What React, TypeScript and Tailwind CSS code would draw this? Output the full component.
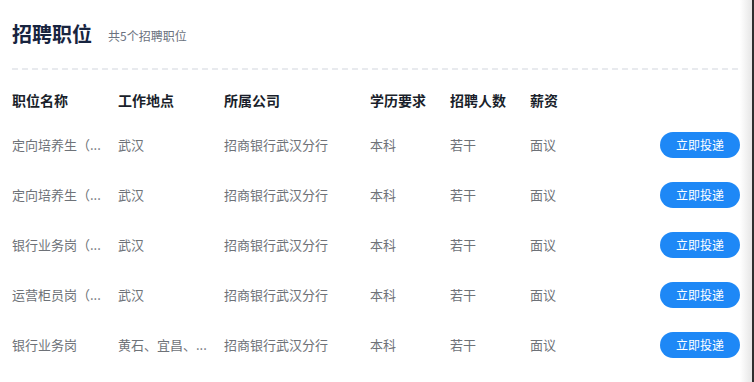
import React from "react";

const rows = [
  { name: "定向培养生（...", loc: "武汉" },
  { name: "定向培养生（...", loc: "武汉" },
  { name: "银行业务岗（...", loc: "武汉" },
  { name: "运营柜员岗（...", loc: "武汉" },
  { name: "银行业务岗", loc: "黄石、宜昌、..." },
];

export default function App() {
  return (
    <div className="flex h-[382px] w-[754px] bg-white font-['Noto_Sans_CJK_SC','Noto_Sans',sans-serif]">
      <div className="w-[740px] shrink-0 pl-[12px]">
        <div className="mt-[20px] flex h-[28px] items-center">
          <h1 className="text-[20px] font-bold leading-[28px] text-[#17243f]">招聘职位</h1>
          <span className="ml-[16px] mt-[3px] text-[12px] text-[#6b7280]">共5个招聘职位</span>
        </div>
        <div className="mt-[20px] h-[2px] bg-[repeating-linear-gradient(90deg,#e8eaee_0_6px,transparent_6px_10px)]" />
        <div className="mt-[10px] flex h-[40px] items-center text-[14px] font-bold text-[#1a1f2b]">
          <div className="w-[106px]">职位名称</div>
          <div className="w-[106px]">工作地点</div>
          <div className="w-[146px]">所属公司</div>
          <div className="w-[80px]">学历要求</div>
          <div className="w-[80px]">招聘人数</div>
          <div className="w-[80px]">薪资</div>
        </div>
        {rows.map((r, i) => (
          <div key={i} className="flex h-[50px] items-center text-[13px] text-[#6e7278]">
            <div className="w-[106px] whitespace-nowrap">{r.name}</div>
            <div className="w-[106px] whitespace-nowrap">{r.loc}</div>
            <div className="w-[146px]">招商银行武汉分行</div>
            <div className="w-[80px]">本科</div>
            <div className="w-[80px]">若干</div>
            <div className="w-[80px]">面议</div>
            <div className="flex flex-1 justify-end">
              <button className="flex h-[26px] w-[80px] items-center justify-center rounded-full bg-[#1e88f6] text-[12px] text-white">
                立即投递
              </button>
            </div>
          </div>
        ))}
      </div>
      <div className="h-full w-[12px] bg-gradient-to-r from-white to-[#e6e6e6]" />
      <div className="h-full w-[2px] bg-[#2e2e2e]" />
    </div>
  );
}
